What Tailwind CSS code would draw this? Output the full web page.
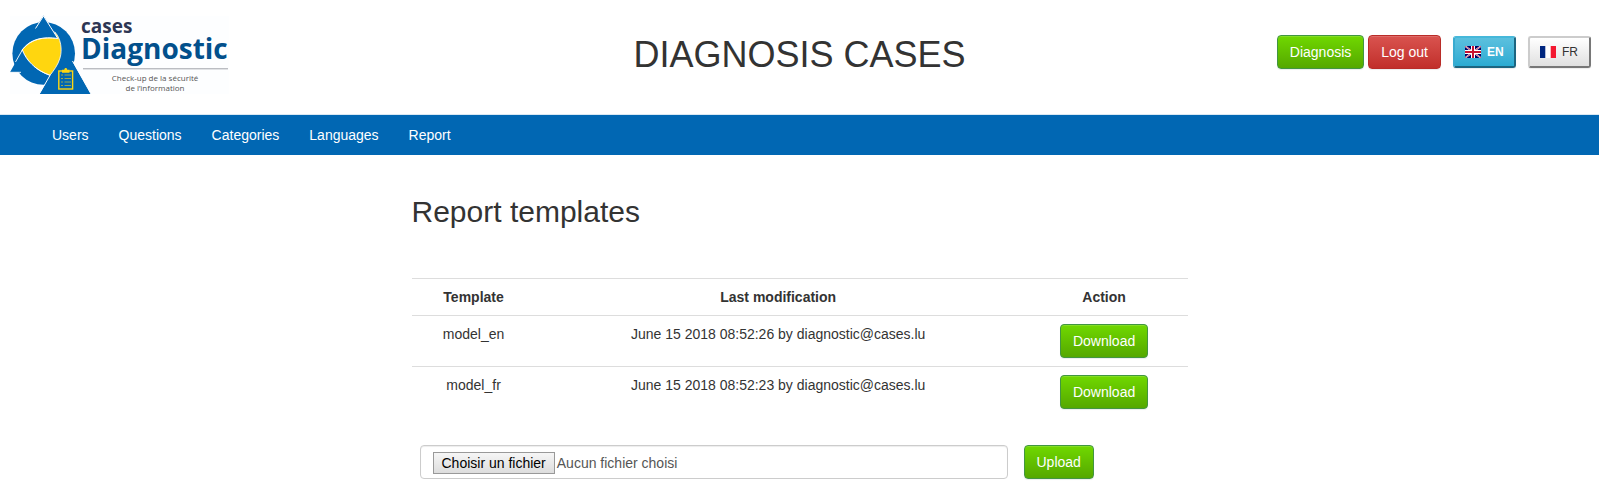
<!DOCTYPE html>
<html lang="en">
<head>
<meta charset="utf-8">
<meta name="viewport" content="width=device-width, initial-scale=1">
<title>Diagnosis Cases</title>
<script src="https://cdn.jsdelivr.net/npm/@tailwindcss/browser@4"></script>
</head>
<body class="bg-white font-['Liberation_Sans',Arial,sans-serif] text-sm leading-5 text-[#333]">
<header class="grid grid-cols-[1fr_auto_1fr] items-start px-2 pb-5">
  <a href="#" class="mt-4 ml-0.5 block w-[219px]" aria-label="Cases Diagnostic">
    <svg class="block h-[78px] w-[219px] overflow-visible" viewBox="10 16 219 78">
      <rect x="10" y="16" width="219" height="78" fill="#fdfeff"/>
      <circle cx="43.7" cy="53.5" r="31.3" fill="#0167b3"/>
      <path d="M22.300 49.800C31 38.500 45 36.500 57.500 38.500L54.500 31.800C61 38 62.500 50 60 58C58 65 54 70 50 75.300C37 71 27 62 22.300 49.800Z" fill="#ffd60f" stroke="#fff" stroke-width=".800"/>
      <path d="M57.800 38.500L43.500 15.500L35 28.500L30 40.500C38 37.500 47 36.500 57.800 38.500Z" fill="#0167b3"/>
      <path d="M35.500 28.500L43.500 16L57.800 38.500C44 36.500 30 38.500 21.800 50.500" fill="none" stroke="#fff" stroke-width="1"/>
      <path d="M22.500 50L10 72.200H21L33 72.500L34 66C29 62 25 57 22.500 50Z" fill="#0167b3"/>
      <path d="M15.500 62L22.300 50C26 60 35 70 50 75.300M10 72.300H21" fill="none" stroke="#fff" stroke-width=".900"/>
      <path d="M50.500 75L39.500 94H91L71 59L64 66Z" fill="#0167b3"/>
      <path d="M50.500 74.500L39.300 94M72.500 61L91 94" fill="none" stroke="#fff" stroke-width="1"/>
      <g fill="none" stroke="#ffd60f">
        <rect x="58.800" y="71" width="13.800" height="18" stroke-width="1.400"/>
        <path d="M61 75H63M64.500 75H71M61 78.500H63M64.500 78.500H71M61 82H63M64.500 82H71M61 85.500H63M64.500 85.500H71" stroke-width="1" opacity=".600"/>
      </g>
      <path d="M62 69.800H64.300C64.300 67.500 67.200 67.500 67.200 69.800H69.500V72.800H62Z" fill="#ffd60f"/>
      <g font-family="Open Sans, Noto Sans, sans-serif">
        <text x="81" y="33" font-size="19" font-weight="700" fill="#2d3653">cases</text>
        <text x="81" y="58.500" font-size="28" font-weight="700" fill="#02508c">Diagnostic</text>
        <text x="155" y="81" font-size="8" text-anchor="middle" fill="#555">Check-up de la sécurité</text>
        <text x="155" y="91" font-size="8" text-anchor="middle" fill="#555">de l’information</text>
      </g>
      <path d="M83 68.800H228" stroke="#9fa2a8" stroke-width="1"/>
    </svg>
  </a>
  <h1 class="mt-[35px] text-4xl leading-10">DIAGNOSIS CASES</h1>
  <div class="mt-[35px] flex items-center justify-end">
    <button class="rounded border border-[#419641] bg-linear-to-b from-[#70d800] to-[#55a800] px-3 py-1.5 text-white shadow-[inset_0_1px_0_rgba(255,255,255,.15),0_1px_1px_rgba(0,0,0,.075)]">Diagnosis</button>
    <button class="ml-1 rounded border border-[#b92c28] bg-linear-to-b from-[#d9534f] to-[#c12e2a] px-3 py-1.5 text-white shadow-[inset_0_1px_0_rgba(255,255,255,.15),0_1px_1px_rgba(0,0,0,.075)]">Log out</button>
    <button class="ml-3 flex h-8 w-[63px] items-center gap-1.5 rounded-[3px] border-2 border-t-[#46b8da] border-r-[#1c6580] border-b-[#1c6580] border-l-[#39abd0] bg-linear-to-b from-[#5bc0de] to-[#2aabd2] px-2.5 text-xs font-bold text-white shadow-[0_1px_1px_rgba(0,0,0,.075)]">
      <svg class="h-3 w-4 shrink-0" viewBox="0 0 16 12"><path fill="#006" d="M0 0h16v12H0z"/><path d="M0 0L16 12M16 0L0 12" stroke="#fff" stroke-width="1.600"/><path d="M0 0L16 12M16 0L0 12" stroke="#c8102e" stroke-width=".700"/><path d="M8 0V12M0 6H16" stroke="#fff" stroke-width="4"/><path d="M8 0V12M0 6H16" stroke="#c8102e" stroke-width="2"/></svg>
      <span>EN</span>
    </button>
    <button class="ml-3 flex h-8 w-[63px] items-center gap-1.5 rounded-[3px] border-2 border-t-[#ccc] border-r-[#777] border-b-[#777] border-l-[#ccc] bg-linear-to-b from-white to-[#e0e0e0] px-2.5 text-xs shadow-[0_1px_1px_rgba(0,0,0,.075)]">
      <svg class="h-3 w-4 shrink-0" viewBox="0 0 16 12"><path fill="#fff" d="M0 0h16v12H0z"/><path fill="#00267f" d="M0 0h5.300v12H0z"/><path fill="#f31830" d="M10.700 0H16v12h-5.300z"/></svg>
      <span>FR</span>
    </button>
  </div>
</header>
<nav class="border-t border-[#d9e8f3] bg-[#0167b3] px-[37px] text-white">
  <ul class="flex">
    <li><a href="#" class="block px-[15px] py-2.5">Users</a></li>
    <li><a href="#" class="block px-[15px] py-2.5">Questions</a></li>
    <li><a href="#" class="block px-[15px] py-2.5">Categories</a></li>
    <li><a href="#" class="block px-[15px] py-2.5">Languages</a></li>
    <li><a href="#" class="block px-[15px] py-2.5">Report</a></li>
  </ul>
</nav>
<main class="mx-auto max-w-[776px] pt-10 pb-4">
  <h2 class="text-3xl leading-[34px]">Report templates</h2>
  <table class="mt-[49px] w-full table-fixed text-center">
    <colgroup><col class="w-[16%]"><col><col class="w-[21.5%]"></colgroup>
    <thead>
      <tr class="border-t border-[#ddd]"><th class="p-2">Template</th><th class="p-2">Last modification</th><th class="p-2">Action</th></tr>
    </thead>
    <tbody>
      <tr class="border-t border-[#ddd] align-top">
        <td class="p-2">model_en</td><td class="p-2">June 15 2018 08:52:26 by diagnostic@cases.lu</td>
        <td class="p-2"><button class="block mx-auto rounded border border-[#419641] bg-linear-to-b from-[#70d800] to-[#55a800] px-3 py-1.5 text-white shadow-[inset_0_1px_0_rgba(255,255,255,.15),0_1px_1px_rgba(0,0,0,.075)]">Download</button></td>
      </tr>
      <tr class="border-t border-[#ddd] align-top">
        <td class="p-2">model_fr</td><td class="p-2">June 15 2018 08:52:23 by diagnostic@cases.lu</td>
        <td class="p-2"><button class="block mx-auto rounded border border-[#419641] bg-linear-to-b from-[#70d800] to-[#55a800] px-3 py-1.5 text-white shadow-[inset_0_1px_0_rgba(255,255,255,.15),0_1px_1px_rgba(0,0,0,.075)]">Download</button></td>
      </tr>
    </tbody>
  </table>
  <form class="mt-7 flex items-center gap-4 pl-2">
    <label class="relative flex h-[34px] w-[588px] items-center gap-0.5 rounded border border-[#ccc] px-3 pt-0.5 text-[#555] shadow-[inset_0_1px_1px_rgba(0,0,0,.075)]">
      <input type="file" class="sr-only">
      <span class="border border-[#999] bg-linear-to-b from-[#f6f6f6] to-[#dddddd] px-2 text-black">Choisir un fichier</span>
      <span>Aucun fichier choisi</span>
    </label>
    <button type="button" class="rounded border border-[#419641] bg-linear-to-b from-[#70d800] to-[#55a800] px-3 py-1.5 text-white shadow-[inset_0_1px_0_rgba(255,255,255,.15),0_1px_1px_rgba(0,0,0,.075)]">Upload</button>
  </form>
</main>
</body>
</html>
